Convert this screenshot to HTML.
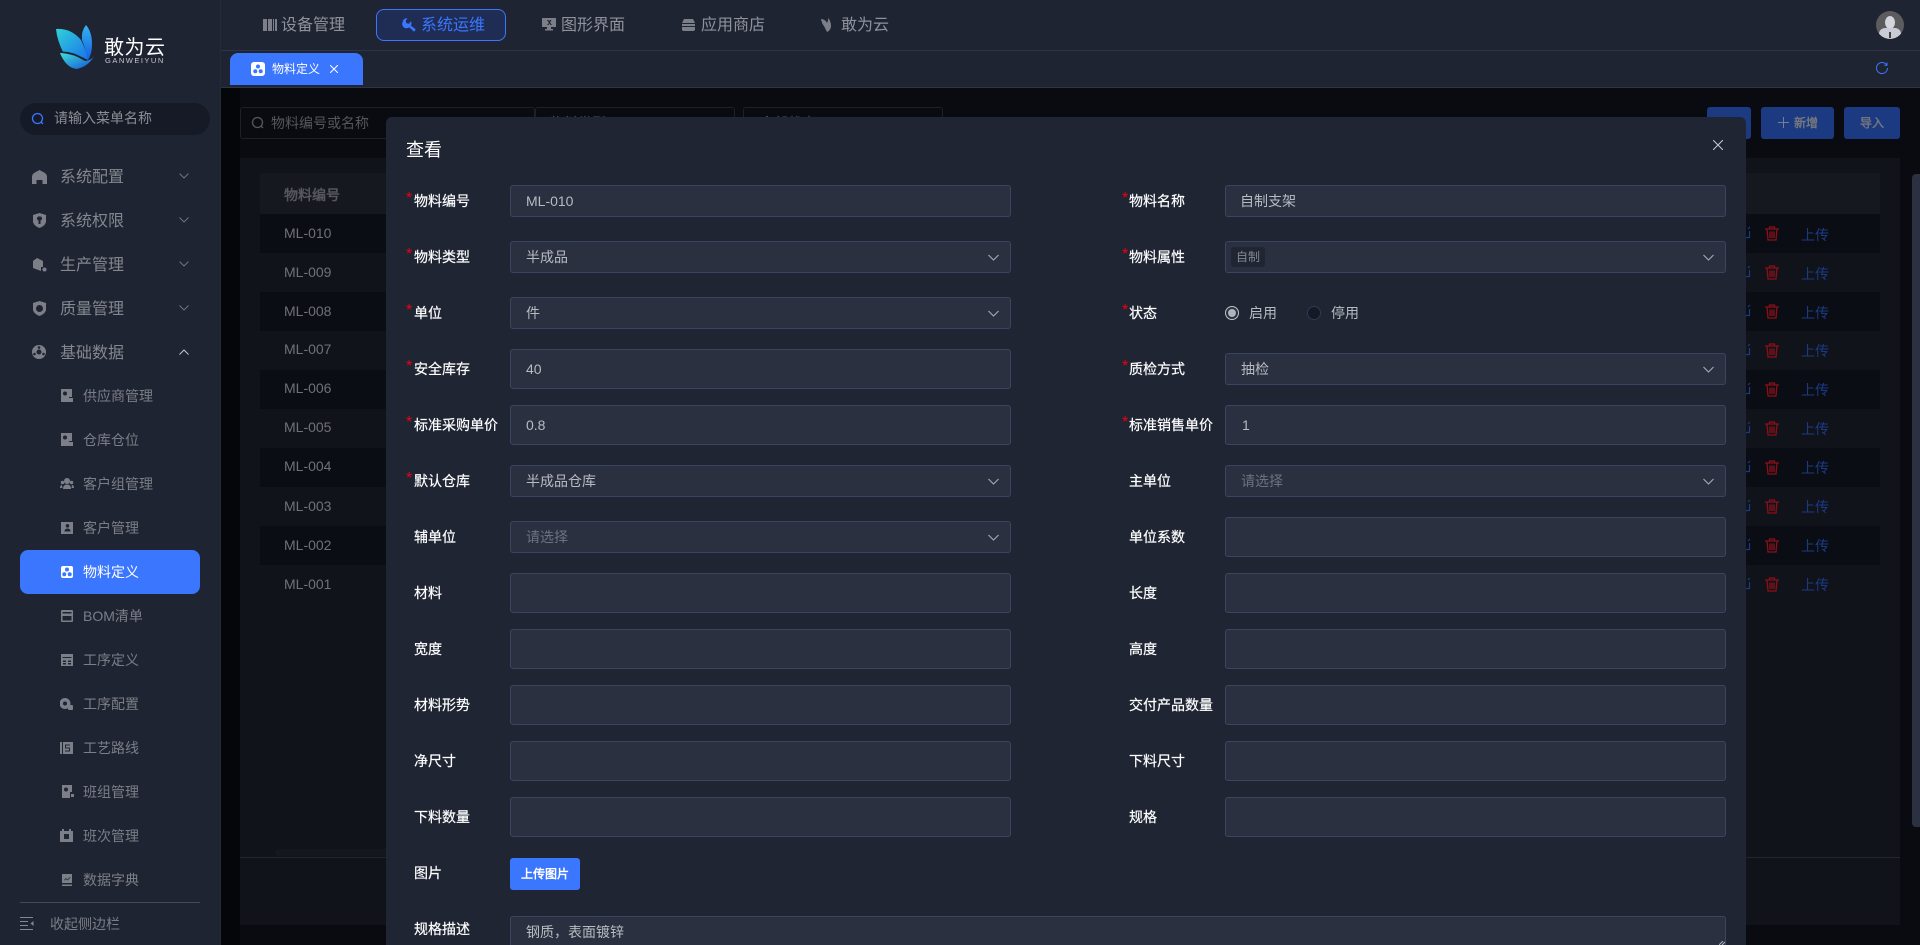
<!DOCTYPE html>
<html lang="zh-CN"><head><meta charset="utf-8"><title>物料定义</title>
<style>
*{box-sizing:border-box;margin:0;padding:0}
html,body{width:1920px;height:945px;overflow:hidden;background:#090b10}
body{position:relative;font-family:"Liberation Sans","WenQuanYi Zen Hei",sans-serif;font-size:14px;color:#fff}
.a,.t,svg{position:absolute}
.t{white-space:nowrap;line-height:20px}
.side{left:0;top:0;width:221px;height:945px;background:#1f2433;border-right:1px solid #252a39}
.top{left:221px;top:0;width:1699px;height:88px;background:#1f2433}
.n{font-size:16px;color:#85878e}
.s{font-size:14px;color:#7c7e86}
.tn{font-size:16px;color:#8f929a;top:16px}
.i{fill:#7c7f88}
.row{left:260px;width:1620px;height:39px}
.ml{left:284px;color:#6f7176;font-size:14px}
.up{left:1801px;color:#1b3a85;font-size:14px}
.del{left:1765px}
.modal{left:386px;top:117px;width:1360px;height:840px;background:#1f2533;border-radius:6px 6px 0 0}
.in{background:#2a3040;border:1px solid #3a4560;border-radius:3px}
.l1{left:510px;width:501px}.l2{left:1225px;width:501px}
.h32{height:32px}.h40{height:40px}
.lb{color:#fff;font-size:14px;-webkit-text-stroke:.2px #fff}
.st{color:#f00012;font-size:16px;margin-top:-1px}
.v{color:#b8bbc2;font-size:14px}
.ph{color:#6d7280;font-size:14px}
</style></head><body>

<!-- background content -->
<div class="a" style="left:221px;top:88px;width:19px;height:857px;background:#050609"></div>
<div class="a" style="left:240px;top:107px;width:295px;height:32px;border:1px solid #1c2029;border-radius:3px"></div>
<div class="a" style="left:535px;top:107px;width:200px;height:32px;border:1px solid #1c2029;border-radius:3px"></div>
<div class="a" style="left:743px;top:107px;width:200px;height:32px;border:1px solid #1c2029;border-radius:3px"></div>
<div class="t" style="left:271px;top:113px;color:#55575c">物料编号或名称</div>
<div class="t" style="left:550px;top:113px;color:#55575c">物料类型</div>
<div class="t" style="left:760px;top:113px;color:#55575c">全部状态</div>
<svg style="left:251px;top:116px" width="14" height="14" viewBox="0 0 14 14" fill="none" stroke="#55575c" stroke-width="1.3"><circle cx="6.5" cy="6.5" r="5"/><path d="M10.2 10.2L12 12"/></svg>
<div class="a" style="left:1707px;top:107px;width:44px;height:32px;background:#1c3a82;border-radius:3px"></div>
<div class="a" style="left:1761px;top:107px;width:73px;height:32px;background:#1c3a82;border-radius:3px"></div>
<div class="t" style="left:1794px;top:113px;color:#74767d;font-size:12px;font-weight:700">新增</div>
<svg style="left:1778px;top:117px" width="11" height="11" viewBox="0 0 11 11" stroke="#74808f" fill="none"><path d="M5.5 0V11M0 5.5H11"/></svg>
<div class="a" style="left:1844px;top:107px;width:56px;height:32px;background:#1c3a82;border-radius:3px"></div>
<div class="t" style="left:1860px;top:113px;color:#74767d;font-size:12px;font-weight:700">导入</div>

<div class="a" style="left:240px;top:158px;width:1660px;height:767px;background:#10131a"></div>
<div class="a" style="left:260px;top:173px;width:1620px;height:41px;background:#15181f"></div>
<div class="t" style="left:284px;top:185px;color:#55575c;font-weight:700">物料编号</div>
<div class="a row" style="top:214px;background:#0a0d14"></div>
<div class="a row" style="top:292px;background:#0a0d14"></div>
<div class="a row" style="top:370px;background:#0a0d14"></div>
<div class="a row" style="top:448px;background:#0a0d14"></div>
<div class="a row" style="top:526px;background:#0a0d14"></div>
<div class="t ml" style="top:223px">ML-010</div>
<div class="t ml" style="top:262px">ML-009</div>
<div class="t ml" style="top:301px">ML-008</div>
<div class="t ml" style="top:339px">ML-007</div>
<div class="t ml" style="top:378px">ML-006</div>
<div class="t ml" style="top:417px">ML-005</div>
<div class="t ml" style="top:456px">ML-004</div>
<div class="t ml" style="top:496px">ML-003</div>
<div class="t ml" style="top:535px">ML-002</div>
<div class="t ml" style="top:574px">ML-001</div>
<div class="t up" style="top:225px">上传</div>
<div class="t up" style="top:264px">上传</div>
<div class="t up" style="top:303px">上传</div>
<div class="t up" style="top:341px">上传</div>
<div class="t up" style="top:380px">上传</div>
<div class="t up" style="top:419px">上传</div>
<div class="t up" style="top:458px">上传</div>
<div class="t up" style="top:497px">上传</div>
<div class="t up" style="top:536px">上传</div>
<div class="t up" style="top:575px">上传</div>
<svg class="del" style="top:226px" width="14" height="15" viewBox="0 0 14 15" fill="none" stroke="#8c0f18" stroke-width="1.3"><path d="M0 3H14M4.5 3V1H9.500V3M2 3L3 14H11L12 3M5 5.500V12M7 5.500V12M9 5.500V12"/></svg>
<svg class="del" style="top:265px" width="14" height="15" viewBox="0 0 14 15" fill="none" stroke="#8c0f18" stroke-width="1.3"><path d="M0 3H14M4.5 3V1H9.500V3M2 3L3 14H11L12 3M5 5.500V12M7 5.500V12M9 5.500V12"/></svg>
<svg class="del" style="top:304px" width="14" height="15" viewBox="0 0 14 15" fill="none" stroke="#8c0f18" stroke-width="1.3"><path d="M0 3H14M4.5 3V1H9.500V3M2 3L3 14H11L12 3M5 5.500V12M7 5.500V12M9 5.500V12"/></svg>
<svg class="del" style="top:343px" width="14" height="15" viewBox="0 0 14 15" fill="none" stroke="#8c0f18" stroke-width="1.3"><path d="M0 3H14M4.5 3V1H9.500V3M2 3L3 14H11L12 3M5 5.500V12M7 5.500V12M9 5.500V12"/></svg>
<svg class="del" style="top:382px" width="14" height="15" viewBox="0 0 14 15" fill="none" stroke="#8c0f18" stroke-width="1.3"><path d="M0 3H14M4.5 3V1H9.500V3M2 3L3 14H11L12 3M5 5.500V12M7 5.500V12M9 5.500V12"/></svg>
<svg class="del" style="top:421px" width="14" height="15" viewBox="0 0 14 15" fill="none" stroke="#8c0f18" stroke-width="1.3"><path d="M0 3H14M4.5 3V1H9.500V3M2 3L3 14H11L12 3M5 5.500V12M7 5.500V12M9 5.500V12"/></svg>
<svg class="del" style="top:460px" width="14" height="15" viewBox="0 0 14 15" fill="none" stroke="#8c0f18" stroke-width="1.3"><path d="M0 3H14M4.5 3V1H9.500V3M2 3L3 14H11L12 3M5 5.500V12M7 5.500V12M9 5.500V12"/></svg>
<svg class="del" style="top:499px" width="14" height="15" viewBox="0 0 14 15" fill="none" stroke="#8c0f18" stroke-width="1.3"><path d="M0 3H14M4.5 3V1H9.500V3M2 3L3 14H11L12 3M5 5.500V12M7 5.500V12M9 5.500V12"/></svg>
<svg class="del" style="top:538px" width="14" height="15" viewBox="0 0 14 15" fill="none" stroke="#8c0f18" stroke-width="1.3"><path d="M0 3H14M4.5 3V1H9.500V3M2 3L3 14H11L12 3M5 5.500V12M7 5.500V12M9 5.500V12"/></svg>
<svg class="del" style="top:577px" width="14" height="15" viewBox="0 0 14 15" fill="none" stroke="#8c0f18" stroke-width="1.3"><path d="M0 3H14M4.5 3V1H9.500V3M2 3L3 14H11L12 3M5 5.500V12M7 5.500V12M9 5.500V12"/></svg>
<div class="a" style="left:240px;top:857px;width:1660px;height:1px;background:#23262e"></div>
<div class="a" style="left:275px;top:849px;width:300px;height:7px;background:#14171e;border-radius:3px"></div>
<div class="a" style="left:1912px;top:174px;width:8px;height:653px;background:#2b3140;border-radius:4px 0 0 4px"></div>
<svg style="left:1746px;top:226px" width="5" height="14" viewBox="0 0 5 14" fill="none" stroke="#1b3a85" stroke-width="1.200"><path d="M0 11.500H3.500V5M2 3L4 1"/></svg>
<svg style="left:1746px;top:265px" width="5" height="14" viewBox="0 0 5 14" fill="none" stroke="#1b3a85" stroke-width="1.200"><path d="M0 11.500H3.500V5M2 3L4 1"/></svg>
<svg style="left:1746px;top:304px" width="5" height="14" viewBox="0 0 5 14" fill="none" stroke="#1b3a85" stroke-width="1.200"><path d="M0 11.500H3.500V5M2 3L4 1"/></svg>
<svg style="left:1746px;top:343px" width="5" height="14" viewBox="0 0 5 14" fill="none" stroke="#1b3a85" stroke-width="1.200"><path d="M0 11.500H3.500V5M2 3L4 1"/></svg>
<svg style="left:1746px;top:382px" width="5" height="14" viewBox="0 0 5 14" fill="none" stroke="#1b3a85" stroke-width="1.200"><path d="M0 11.500H3.500V5M2 3L4 1"/></svg>
<svg style="left:1746px;top:421px" width="5" height="14" viewBox="0 0 5 14" fill="none" stroke="#1b3a85" stroke-width="1.200"><path d="M0 11.500H3.500V5M2 3L4 1"/></svg>
<svg style="left:1746px;top:460px" width="5" height="14" viewBox="0 0 5 14" fill="none" stroke="#1b3a85" stroke-width="1.200"><path d="M0 11.500H3.500V5M2 3L4 1"/></svg>
<svg style="left:1746px;top:499px" width="5" height="14" viewBox="0 0 5 14" fill="none" stroke="#1b3a85" stroke-width="1.200"><path d="M0 11.500H3.500V5M2 3L4 1"/></svg>
<svg style="left:1746px;top:538px" width="5" height="14" viewBox="0 0 5 14" fill="none" stroke="#1b3a85" stroke-width="1.200"><path d="M0 11.500H3.500V5M2 3L4 1"/></svg>
<svg style="left:1746px;top:577px" width="5" height="14" viewBox="0 0 5 14" fill="none" stroke="#1b3a85" stroke-width="1.200"><path d="M0 11.500H3.500V5M2 3L4 1"/></svg>

<!-- top bars -->
<div class="a top"></div>
<div class="a" style="left:221px;top:50px;width:1699px;height:1px;background:#2e3444"></div>
<div class="a" style="left:221px;top:87px;width:1699px;height:1px;background:#2e3444"></div>

<svg class="i" style="left:263px;top:18px" width="14" height="14" viewBox="0 0 14 14"><path d="M0 1H4V13H0zM5 1H9V13H5zM10 1H11V13H10zM12 1H14V13H12z"/></svg>
<div class="t tn" style="left:281px">设备管理</div>
<div class="a" style="left:376px;top:9px;width:130px;height:32px;border:1px solid #3b76ff;border-radius:8px;background:#1f2d55"></div>
<svg style="left:402px;top:18px" width="14" height="14" viewBox="0 0 14 14" fill="#3b76ff"><path d="M.5 4.500A4.200 4.200 0 0 1 5.500 .3L3.600 3 4.500 5.200 7 5.800 9 3.300A4.200 4.200 0 0 1 8.800 7.500L13.800 11.500 12 13.800 7.200 9.200A4.200 4.200 0 0 1 .5 4.500z"/></svg>
<div class="t" style="left:421px;top:16px;font-size:16px;color:#3b76ff">系统运维</div>
<svg class="i" style="left:542px;top:18px" width="14" height="13" viewBox="0 0 14 13"><path fill-rule="evenodd" d="M0 0H14V9H9V11H11V12.500H3V11H5V9H0zM5 2L7 5 5 7H6.500L7.500 5.500 8.500 7H10L8 4.500 9.500 2H8L7 3.500 6.500 2z"/></svg>
<div class="t tn" style="left:561px">图形界面</div>
<svg class="i" style="left:682px;top:19px" width="13" height="12" viewBox="0 0 13 12"><path d="M2 0H11L13 4H0zM0 5H13V7H0zM0 8H13V10.500Q13 12 11 12H2Q0 12 0 10.500z"/></svg>
<div class="t tn" style="left:701px">应用商店</div>
<svg class="i" style="left:821px;top:18px" width="15" height="14" viewBox="0 0 15 14"><path d="M0 1Q4 1 6 5Q7 3 7.500 0Q10 4 10 8Q10 12 6 14Q4 10 3 8Q1 6 0 1z"/></svg>
<div class="t tn" style="left:841px">敢为云</div>

<div class="a" style="left:1876px;top:11px;width:28px;height:28px;border-radius:50%;background:#5c5c5e;overflow:hidden">
<div class="a" style="left:9px;top:5px;width:10px;height:13px;border-radius:50%;background:#d4d6dc"></div>
<div class="a" style="left:3px;top:17px;width:22px;height:12px;border-radius:6px 6px 0 0;background:#c9ccd4"></div>
<div class="a" style="left:13px;top:21px;width:2px;height:6px;background:#444"></div>
</div>

<div class="a" style="left:230px;top:53px;width:133px;height:32px;background:#3b76ff;border-radius:8px 8px 0 0"></div>
<div class="a" style="left:251px;top:62px;width:14px;height:14px;background:#fff;border-radius:3px"></div>
<svg style="left:253px;top:64px" width="10" height="10" viewBox="0 0 10 10" fill="#3b76ff"><circle cx="5" cy="2.500" r="2"/><circle cx="2.300" cy="7.300" r="2"/><circle cx="7.700" cy="7.300" r="2"/></svg>
<div class="t" style="left:272px;top:59px;font-size:12px;color:#fff">物料定义</div>
<svg style="left:330px;top:65px" width="8" height="8" viewBox="0 0 8 8" stroke="#fff" stroke-width="1" fill="none"><path d="M0 0L8 8M8 0L0 8"/></svg>
<svg style="left:1876px;top:62px" width="12" height="12" viewBox="0 0 12 12" fill="none" stroke="#3b76ff" stroke-width="1"><path d="M10.600 3A5.500 5.500 0 1 0 11.500 6M11 .5V3.200H8.300"/></svg>

<!-- sidebar -->
<div class="a side"></div>
<svg style="left:55px;top:24px" width="46" height="46" viewBox="0 0 46 46">
<defs>
<linearGradient id="g1" x1="0" y1="0" x2="1" y2="1"><stop offset="0" stop-color="#2fd0d8"/><stop offset="1" stop-color="#1a74ea"/></linearGradient>
<linearGradient id="g2" x1="0" y1="0" x2="0" y2="1"><stop offset="0" stop-color="#35b4ee"/><stop offset="1" stop-color="#1460e4"/></linearGradient>
<linearGradient id="g3" x1="0" y1="0" x2="1" y2="1"><stop offset="0" stop-color="#3ee0d8"/><stop offset="1" stop-color="#1450d8"/></linearGradient>
</defs>
<path fill="url(#g1)" d="M1 5Q16 4 26 16Q32 28 33 36Q22 30 8 28Q2 16 1 5z"/>
<path fill="url(#g2)" d="M27 16Q26 7 31 1Q37 8 37 20Q37 30 33 36Q31 26 27 16z"/>
<path fill="url(#g3)" d="M5 29Q18 28 30 37Q37 36 39 32Q34 42 22 45Q11 44 5 29z"/>
<path fill="#1f2433" d="M6 27.500Q18 27 30 35L30 37Q18 29.500 6 29z"/>
</svg>
<div class="t" style="left:104px;top:34px;font-family:'Liberation Sans','Noto Sans CJK SC',sans-serif;font-size:20px;line-height:28px;color:#fff;letter-spacing:0.500px">敢为云</div>
<div class="t" style="left:105px;top:55px;font-size:7.500px;line-height:12px;color:#c6c8ce;letter-spacing:1.500px;width:64px">GANWEIYUN</div>

<div class="a" style="left:20px;top:103px;width:190px;height:32px;background:#161a27;border-radius:16px"></div>
<svg style="left:31px;top:112px" width="14" height="14" viewBox="0 0 14 14" fill="none" stroke="#3b76ff" stroke-width="1.300"><circle cx="6.500" cy="6.500" r="5"/><path d="M10.200 10.200L12 12"/></svg>
<div class="t" style="left:54px;top:108px;color:#8b8d94">请输入菜单名称</div>

<svg class="i" style="left:32px;top:170px" width="15" height="14" viewBox="0 0 15 14"><path fill-rule="evenodd" d="M7.500 0L13 3Q15 4.500 15 7V14H0V7Q0 4.500 2 3zM4.500 10V14H10.500V10z"/></svg>
<div class="t n" style="left:60px;top:168px">系统配置</div>
<svg class="i" style="left:33px;top:213px" width="13" height="15" viewBox="0 0 13 15"><path fill-rule="evenodd" d="M6.500 0L13 2V9Q12 13 6.500 15Q1 13 0 9V2zM6.500 3.500A2 2 0 0 0 5.500 7.500V11H7.500V7.500A2 2 0 0 0 6.500 3.500z"/></svg>
<div class="t n" style="left:60px;top:212px">系统权限</div>
<svg class="i" style="left:32px;top:258px" width="15" height="14" viewBox="0 0 15 14"><path d="M5 0L11 3V9H9V13L1 10V3z"/><circle cx="12.500" cy="11.500" r="2"/></svg>
<div class="t n" style="left:60px;top:256px">生产管理</div>
<svg class="i" style="left:33px;top:301px" width="13" height="15" viewBox="0 0 13 15"><path fill-rule="evenodd" d="M6.500 0L13 2V9Q12 13 6.500 15Q1 13 0 9V2zM6.500 4A3.500 3.500 0 1 0 6.500 11A3.500 3.500 0 1 0 6.500 4z"/></svg>
<div class="t n" style="left:60px;top:300px">质量管理</div>
<svg class="i" style="left:32px;top:345px" width="14" height="14" viewBox="0 0 14 14"><path fill-rule="evenodd" d="M7 0A7 7 0 1 0 7 14A7 7 0 1 0 7 0zM7 4.500A2.500 2.500 0 1 1 7 9.500A2.500 2.500 0 1 1 7 4.500z"/><circle cx="7" cy="2.500" r="1.300" fill="#1f2433"/><circle cx="2.500" cy="9" r="1.300" fill="#1f2433"/><circle cx="11.500" cy="9" r="1.300" fill="#1f2433"/></svg>
<div class="t n" style="left:60px;top:344px">基础数据</div>
<svg style="left:179px;top:173px" width="10" height="6" viewBox="0 0 10 6" fill="none" stroke="#6f727b"><path d="M.5 .5L5 5L9.500 .5"/></svg>
<svg style="left:179px;top:217px" width="10" height="6" viewBox="0 0 10 6" fill="none" stroke="#6f727b"><path d="M.5 .5L5 5L9.500 .5"/></svg>
<svg style="left:179px;top:261px" width="10" height="6" viewBox="0 0 10 6" fill="none" stroke="#6f727b"><path d="M.5 .5L5 5L9.500 .5"/></svg>
<svg style="left:179px;top:305px" width="10" height="6" viewBox="0 0 10 6" fill="none" stroke="#6f727b"><path d="M.5 .5L5 5L9.500 .5"/></svg>
<svg style="left:179px;top:349px" width="10" height="6" viewBox="0 0 10 6" fill="none" stroke="#c4c6cc"><path d="M.5 5.500L5 1L9.500 5.500"/></svg>

<svg class="i" style="left:60px;top:389px" width="13" height="13" viewBox="0 0 13 13"><path fill-rule="evenodd" d="M1 0H12V8H9V13H1zM5 2.500A2 2 0 1 0 5 6.500A2 2 0 1 0 5 2.500z"/><rect x="9" y="9" width="4" height="4"/></svg>
<div class="t s" style="left:83px;top:386px">供应商管理</div>
<svg class="i" style="left:60px;top:433px" width="13" height="13" viewBox="0 0 13 13"><path fill-rule="evenodd" d="M1 0H12V8H9V13H1zM5 2.500A2 2 0 1 0 5 6.500A2 2 0 1 0 5 2.500z"/><rect x="9" y="9" width="4" height="4"/></svg>
<div class="t s" style="left:83px;top:430px">仓库仓位</div>
<svg class="i" style="left:60px;top:478px" width="14" height="11" viewBox="0 0 14 11"><circle cx="7" cy="3" r="3"/><circle cx="2.500" cy="4.500" r="1.800"/><circle cx="11.500" cy="4.500" r="1.800"/><path d="M3 11Q3 6.500 7 6.500Q11 6.500 11 11zM0 10Q0 7 2 7L2.500 10zM14 10Q14 7 12 7L11.500 10z"/></svg>
<div class="t s" style="left:83px;top:474px">客户组管理</div>
<svg class="i" style="left:61px;top:522px" width="12" height="12" viewBox="0 0 12 12"><path fill-rule="evenodd" d="M0 0H12V12H0zM6.500 2A1.800 1.800 0 1 0 6.500 5.600A1.800 1.800 0 1 0 6.500 2zM3.500 9.500H9.500Q9.500 6.500 6.500 6.500Q3.500 6.500 3.500 9.500z"/></svg>
<div class="t s" style="left:83px;top:518px">客户管理</div>

<div class="a" style="left:20px;top:550px;width:180px;height:44px;background:#3b76ff;border-radius:8px"></div>
<div class="a" style="left:61px;top:566px;width:12px;height:12px;background:#fff;border-radius:2px"></div>
<svg style="left:62px;top:567px" width="10" height="10" viewBox="0 0 10 10" fill="#3b76ff"><circle cx="5" cy="2.500" r="2"/><circle cx="2.300" cy="7.300" r="2"/><circle cx="7.700" cy="7.300" r="2"/></svg>
<div class="t" style="left:83px;top:562px;color:#fff">物料定义</div>

<svg class="i" style="left:61px;top:610px" width="12" height="12" viewBox="0 0 12 12"><path fill-rule="evenodd" d="M1 0H11Q12 0 12 1V11Q12 12 11 12H1Q0 12 0 11V1Q0 0 1 0zM1.500 2V3.500H10.500V2zM1.500 6V10.500H10.500V6z"/></svg>
<div class="t s" style="left:83px;top:606px">BOM清单</div>
<svg class="i" style="left:61px;top:654px" width="12" height="12" viewBox="0 0 12 12"><path fill-rule="evenodd" d="M0 0H12V12H0zM1.500 3H10.500V4H1.500zM2 6.500V8H5V6.500zM7 6.500V8H10V6.500zM2 9V10.500H5V9zM7 9V10.500H10V9z"/></svg>
<div class="t s" style="left:83px;top:650px">工序定义</div>
<svg class="i" style="left:60px;top:698px" width="13" height="12" viewBox="0 0 13 12"><path fill-rule="evenodd" d="M5 0A5.500 5.500 0 1 0 5 11A5.500 5.500 0 1 0 5 0zM5 3.500A2 2 0 1 1 5 7.500A2 2 0 1 1 5 3.500z"/><rect x="8" y="7" width="5" height="5" rx="1"/></svg>
<div class="t s" style="left:83px;top:694px">工序配置</div>
<svg class="i" style="left:60px;top:742px" width="13" height="12" viewBox="0 0 13 12"><path fill-rule="evenodd" d="M0 0H2V12H0zM3 0H13V12H3zM5 2.500V6.500H9V8.500H5V9.500H10V5.500H6V3.500H10V2.500z"/></svg>
<div class="t s" style="left:83px;top:738px">工艺路线</div>
<svg class="i" style="left:61px;top:785px" width="13" height="13" viewBox="0 0 13 13"><path fill-rule="evenodd" d="M1 0H11V7H9V13H1zM5 2.500A2 2 0 1 0 5 6.500A2 2 0 1 0 5 2.500z"/><rect x="10" y="9" width="3" height="3"/></svg>
<div class="t s" style="left:83px;top:782px">班组管理</div>
<svg class="i" style="left:60px;top:829px" width="13" height="13" viewBox="0 0 13 13"><path fill-rule="evenodd" d="M0 2H2V0H4V2H9V0H11V2H13V13H0zM4 5V10H9V5z"/></svg>
<div class="t s" style="left:83px;top:826px">班次管理</div>
<svg class="i" style="left:61px;top:874px" width="12" height="12" viewBox="0 0 12 12"><path fill-rule="evenodd" d="M1 0H11V9H1zM3 6L5 4 6.500 5.500 9 3 9.500 3.500 6.500 6.500 5 5 3.500 6.500zM1 10.500H11V12H1z"/></svg>
<div class="t s" style="left:83px;top:870px">数据字典</div>

<div class="a" style="left:20px;top:902px;width:180px;height:1px;background:#454a58"></div>
<svg style="left:20px;top:917px" width="14" height="13" viewBox="0 0 14 13" fill="none" stroke="#85878e"><path d="M0 .5H13M0 4.500H8M0 8.500H8M0 12.500H13"/><path d="M13.500 4L10.500 6.500 13.500 9z" fill="#85878e" stroke="none"/></svg>
<div class="t s" style="left:50px;top:914px">收起侧边栏</div>

<!-- modal -->
<div class="a modal"></div>
<div class="t" style="left:406px;top:138px;font-size:18px;line-height:24px;color:#fff">查看</div>
<svg style="left:1713px;top:140px" width="10" height="10" viewBox="0 0 10 10" stroke="#c8ccd4" stroke-width="1" fill="none"><path d="M0 0L10 10M10 0L0 10"/></svg>

<!-- left labels -->
<div class="t st" style="left:406px;top:190px">*</div><div class="t lb" style="left:414px;top:191px">物料编号</div>
<div class="t st" style="left:406px;top:246px">*</div><div class="t lb" style="left:414px;top:247px">物料类型</div>
<div class="t st" style="left:406px;top:302px">*</div><div class="t lb" style="left:414px;top:303px">单位</div>
<div class="t st" style="left:406px;top:358px">*</div><div class="t lb" style="left:414px;top:359px">安全库存</div>
<div class="t st" style="left:406px;top:414px">*</div><div class="t lb" style="left:414px;top:415px">标准采购单价</div>
<div class="t st" style="left:406px;top:470px">*</div><div class="t lb" style="left:414px;top:471px">默认仓库</div>
<div class="t lb" style="left:414px;top:527px">辅单位</div>
<div class="t lb" style="left:414px;top:583px">材料</div>
<div class="t lb" style="left:414px;top:639px">宽度</div>
<div class="t lb" style="left:414px;top:695px">材料形势</div>
<div class="t lb" style="left:414px;top:751px">净尺寸</div>
<div class="t lb" style="left:414px;top:807px">下料数量</div>
<div class="t lb" style="left:414px;top:863px">图片</div>
<div class="t lb" style="left:414px;top:919px">规格描述</div>

<!-- right labels -->
<div class="t st" style="left:1122px;top:190px">*</div><div class="t lb" style="left:1129px;top:191px">物料名称</div>
<div class="t st" style="left:1122px;top:246px">*</div><div class="t lb" style="left:1129px;top:247px">物料属性</div>
<div class="t st" style="left:1122px;top:302px">*</div><div class="t lb" style="left:1129px;top:303px">状态</div>
<div class="t st" style="left:1122px;top:358px">*</div><div class="t lb" style="left:1129px;top:359px">质检方式</div>
<div class="t st" style="left:1122px;top:414px">*</div><div class="t lb" style="left:1129px;top:415px">标准销售单价</div>
<div class="t lb" style="left:1129px;top:471px">主单位</div>
<div class="t lb" style="left:1129px;top:527px">单位系数</div>
<div class="t lb" style="left:1129px;top:583px">长度</div>
<div class="t lb" style="left:1129px;top:639px">高度</div>
<div class="t lb" style="left:1129px;top:695px">交付产品数量</div>
<div class="t lb" style="left:1129px;top:751px">下料尺寸</div>
<div class="t lb" style="left:1129px;top:807px">规格</div>

<!-- left inputs -->
<div class="a in l1 h32" style="top:185px"></div><div class="t v" style="left:526px;top:191px">ML-010</div>
<div class="a in l1 h32" style="top:241px"></div><div class="t v" style="left:526px;top:247px">半成品</div>
<div class="a in l1 h32" style="top:297px"></div><div class="t v" style="left:526px;top:303px">件</div>
<div class="a in l1 h40" style="top:349px"></div><div class="t v" style="left:526px;top:359px">40</div>
<div class="a in l1 h40" style="top:405px"></div><div class="t v" style="left:526px;top:415px">0.8</div>
<div class="a in l1 h32" style="top:465px"></div><div class="t v" style="left:526px;top:471px">半成品仓库</div>
<div class="a in l1 h32" style="top:521px"></div><div class="t ph" style="left:526px;top:527px">请选择</div>
<div class="a in l1 h40" style="top:573px"></div>
<div class="a in l1 h40" style="top:629px"></div>
<div class="a in l1 h40" style="top:685px"></div>
<div class="a in l1 h40" style="top:741px"></div>
<div class="a in l1 h40" style="top:797px"></div>

<!-- right inputs -->
<div class="a in l2 h32" style="top:185px"></div><div class="t v" style="left:1240px;top:191px">自制支架</div>
<div class="a in l2 h32" style="top:241px"></div>
<div class="a" style="left:1231px;top:247px;width:34px;height:20px;background:#1f2533;border-radius:3px"></div>
<div class="t" style="left:1236px;top:247px;font-size:12px;color:#85878e">自制</div>
<div class="a" style="left:1225px;top:306px;width:14px;height:14px;border:1px solid #c0c4cc;border-radius:50%;background:#2a3040"></div>
<div class="a" style="left:1228px;top:309px;width:8px;height:8px;border-radius:50%;background:#b0b3ba"></div>
<div class="t v" style="left:1249px;top:303px">启用</div>
<div class="a" style="left:1307px;top:306px;width:14px;height:14px;border:1px solid #2f3a52;border-radius:50%;background:#141827"></div>
<div class="t v" style="left:1331px;top:303px">停用</div>
<div class="a in l2 h32" style="top:353px"></div><div class="t v" style="left:1241px;top:359px">抽检</div>
<div class="a in l2 h40" style="top:405px"></div><div class="t v" style="left:1242px;top:415px">1</div>
<div class="a in l2 h32" style="top:465px"></div><div class="t ph" style="left:1241px;top:471px">请选择</div>
<div class="a in l2 h40" style="top:517px"></div>
<div class="a in l2 h40" style="top:573px"></div>
<div class="a in l2 h40" style="top:629px"></div>
<div class="a in l2 h40" style="top:685px"></div>
<div class="a in l2 h40" style="top:741px"></div>
<div class="a in l2 h40" style="top:797px"></div>

<!-- chevrons -->
<svg style="left:988px;top:254px" width="11" height="7" viewBox="0 0 11 7" fill="none" stroke="#a8acb5" stroke-width="1.100"><path d="M.5 1L5.500 6L10.500 1"/></svg>
<svg style="left:988px;top:310px" width="11" height="7" viewBox="0 0 11 7" fill="none" stroke="#a8acb5" stroke-width="1.100"><path d="M.5 1L5.500 6L10.500 1"/></svg>
<svg style="left:988px;top:478px" width="11" height="7" viewBox="0 0 11 7" fill="none" stroke="#a8acb5" stroke-width="1.100"><path d="M.5 1L5.500 6L10.500 1"/></svg>
<svg style="left:988px;top:534px" width="11" height="7" viewBox="0 0 11 7" fill="none" stroke="#a8acb5" stroke-width="1.100"><path d="M.5 1L5.500 6L10.500 1"/></svg>
<svg style="left:1703px;top:254px" width="11" height="7" viewBox="0 0 11 7" fill="none" stroke="#a8acb5" stroke-width="1.100"><path d="M.5 1L5.500 6L10.500 1"/></svg>
<svg style="left:1703px;top:366px" width="11" height="7" viewBox="0 0 11 7" fill="none" stroke="#a8acb5" stroke-width="1.100"><path d="M.5 1L5.500 6L10.500 1"/></svg>
<svg style="left:1703px;top:478px" width="11" height="7" viewBox="0 0 11 7" fill="none" stroke="#a8acb5" stroke-width="1.100"><path d="M.5 1L5.500 6L10.500 1"/></svg>

<!-- upload -->
<div class="a" style="left:510px;top:858px;width:70px;height:32px;background:#3b76ff;border-radius:3px"></div>
<div class="t" style="left:521px;top:864px;font-size:12px;font-weight:700;color:#fff">上传图片</div>

<!-- textarea -->
<div class="a in" style="left:510px;top:916px;width:1216px;height:60px"></div>
<div class="t v" style="left:526px;top:922px">钢质，表面镀锌</div>
<svg style="left:1719px;top:941px" width="6" height="4" viewBox="0 0 6 4" stroke="#b0b3ba" fill="none"><path d="M0 4L4 0M3 4L6 1"/></svg>

</body></html>
